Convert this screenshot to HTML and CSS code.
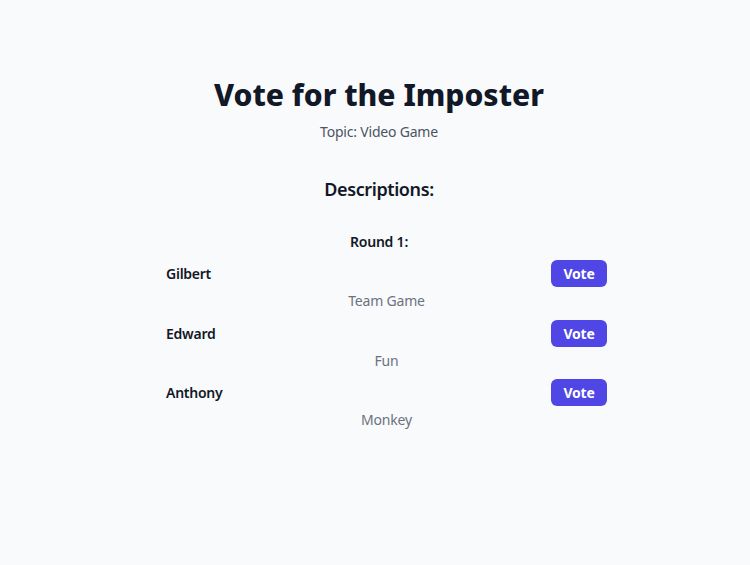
FILE: index.html
```html
<!DOCTYPE html>
<html>
<head>
<meta charset="utf-8">
<link rel="stylesheet" href="styles.css">
</head>
<body>
<main class="page">
  <h1 class="title">Vote for the Imposter</h1>
  <p class="topic">Topic: Video Game</p>
  <h2 class="section">Descriptions:</h2>
  <h3 class="round">Round 1:</h3>
  <div class="list">
    <div class="entry">
      <div class="row"><span class="name">Gilbert</span><button class="vote">Vote</button></div>
      <p class="desc">Team Game</p>
    </div>
    <div class="entry">
      <div class="row"><span class="name">Edward</span><button class="vote">Vote</button></div>
      <p class="desc">Fun</p>
    </div>
    <div class="entry">
      <div class="row"><span class="name">Anthony</span><button class="vote">Vote</button></div>
      <p class="desc">Monkey</p>
    </div>
  </div>
</main>
</body>
</html>
```
FILE: styles.css
```css
html, body {
  margin: 0;
  background: #f9fafb;
}
body {
  font-family: "Noto Sans", "Open Sans", sans-serif;
  color: #111827;
  width: 750px;
  height: 565px;
}
.page {
  padding: 77px 0 0 8px;
  text-align: center;
}
.title {
  margin: 0;
  font-size: 30px;
  line-height: 36px;
  font-weight: 800;
  color: #111827;
}
.topic {
  margin: 9px 0 0;
  font-size: 14px;
  line-height: 20px;
  letter-spacing: -0.2px;
  color: #4b5563;
}
.section {
  margin: 33px 0 0;
  font-size: 18px;
  line-height: 28px;
  font-weight: 600;
  letter-spacing: -0.4px;
  color: #111827;
}
.round {
  margin: 29px 0 0;
  font-size: 14px;
  line-height: 20px;
  font-weight: 600;
  letter-spacing: -0.2px;
  color: #111827;
}
.list {
  width: 441px;
  margin: 8px auto 0;
  padding-left: 15px;
  display: flex;
  flex-direction: column;
  gap: 8.5px;
}
.row {
  display: flex;
  justify-content: space-between;
  align-items: center;
}
.name {
  font-size: 14px;
  font-weight: 600;
  letter-spacing: -0.25px;
  color: #111827;
}
.vote {
  font-family: inherit;
  font-size: 14px;
  line-height: 19px;
  font-weight: 700;
  letter-spacing: -0.2px;
  color: #ffffff;
  background: #4f46e5;
  border: none;
  border-radius: 6px;
  padding: 4px 12px;
  width: 56px;
  height: 27px;
}
.desc {
  margin: 4px 0 0;
  font-size: 14px;
  line-height: 20px;
  letter-spacing: -0.2px;
  color: #6b7280;
}
```
